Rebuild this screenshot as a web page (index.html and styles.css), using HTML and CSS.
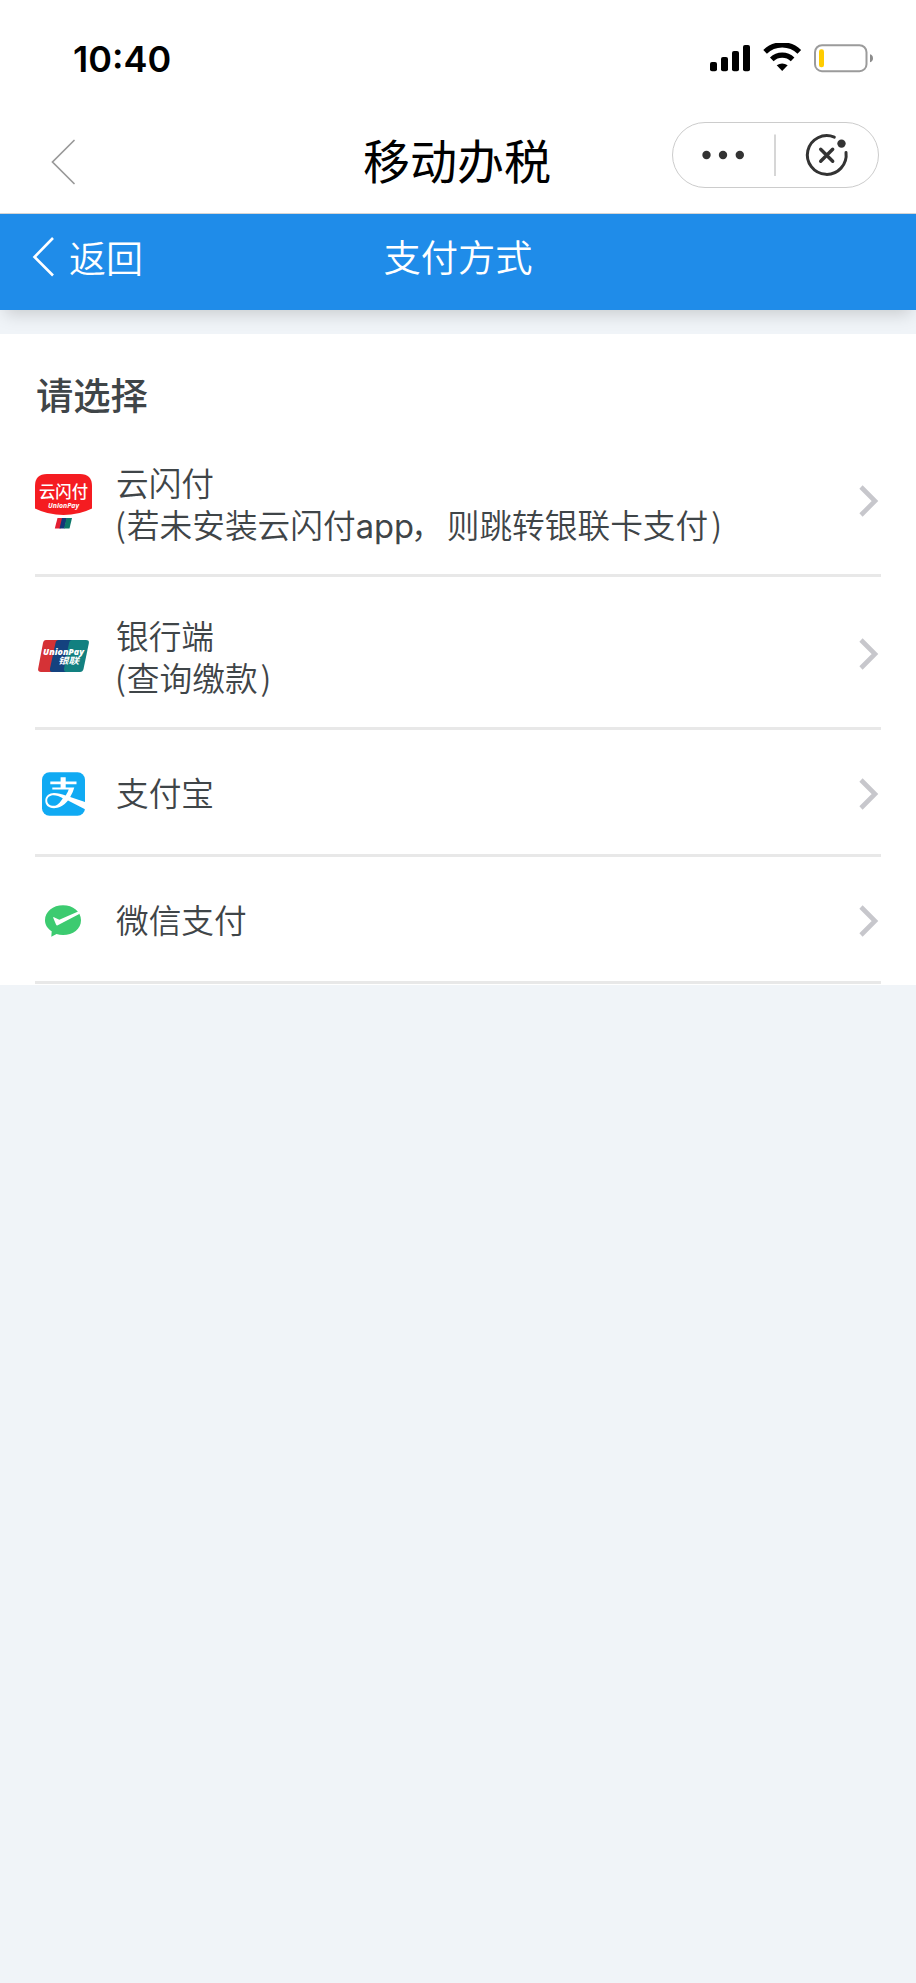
FILE: index.html
```html
<!DOCTYPE html>
<html lang="zh-CN">
<head>
<meta charset="utf-8">
<title>支付方式</title>
<link rel="stylesheet" href="styles.css">
</head>
<body>
<div class="status">
  <span class="time">10:40</span>
  <svg class="status-icons" width="164" height="30" viewBox="0 0 164 30">
    <rect x="0" y="19" width="7" height="9.3" rx="2"/>
    <rect x="11" y="14" width="7" height="14.3" rx="2"/>
    <rect x="22" y="8" width="7" height="20.3" rx="2"/>
    <rect x="33" y="2" width="7" height="26.3" rx="2"/>
    <g fill="none" stroke="#000" stroke-width="5.2">
      <path d="M55.1 8.8A24.5 24.5 0 0 1 89.3 8.8"/>
      <path d="M61.8 16.300A15 15 0 0 1 82.6 16.300"/>
    </g>
    <path d="M66.7 22.2Q72.2 18.8 77.7 22.2L72.2 28Z"/>
    <rect x="105" y="2.2" width="51.5" height="26" rx="7" fill="none" stroke="#9b9b9b" stroke-width="2"/>
    <rect x="109" y="6.2" width="5" height="18" rx="2.2" fill="#fc0"/>
    <path d="M160 11.2Q163 12 163 15.2Q163 18.400 160 19.200Z" fill="#8c8c8c"/>
  </svg>
</div>
<header class="app-bar">
  <svg class="app-back" width="25" height="46" viewBox="0 0 25 46"><path d="M24 1.500L2.500 23L24 44.500" fill="none" stroke="#999" stroke-width="1.700" stroke-linecap="round"/></svg>
  <h1 class="app-title">移动办税</h1>
  <div class="capsule">
    <svg width="205" height="64" viewBox="0 0 205 64">
      <g fill="#333"><circle cx="33.500" cy="32" r="4.200"/><circle cx="50" cy="32" r="4.200"/><circle cx="66.800" cy="32" r="4.200"/><circle cx="168.500" cy="20.600" r="4.200"/></g>
      <path d="M102 11.500V53" stroke="#c8c8c8" stroke-width="1.500"/>
      <g fill="none" stroke="#333" stroke-width="3" stroke-linecap="round"><path d="M161.300 14.100A19.400 19.400 0 1 0 173 29.500"/><path d="M147.700 26.200L159.700 38.200M159.700 26.200L147.700 38.200" stroke-width="3.400"/></g>
    </svg>
  </div>
</header>
<nav class="nav">
  <a class="nav-back"><svg width="22" height="40" viewBox="0 0 22 40"><path d="M21 1L2.500 20L21 38.500" fill="none" stroke="#fff" stroke-width="2.600"/></svg><span>返回</span></a>
  <h2 class="nav-title">支付方式</h2>
</nav>
<main class="panel">
  <h3 class="heading">请选择</h3>
  <ul class="methods">
    <li class="method double">
      <div class="logo">
        <svg width="57" height="55" viewBox="0 0 57 55">
          <path d="M0 12Q0 0 12 0H45Q57 0 57 12V34.500Q44 41 28.500 41T0 34.500Z" fill="#f51c21"/>
          <text class="cloud-name" x="4" y="23.500" textLength="49" lengthAdjust="spacingAndGlyphs">云闪付</text>
          <text class="cloud-sub" x="13" y="33.500" textLength="31" lengthAdjust="spacingAndGlyphs">UnionPay</text>
          <path d="M22.500 44H28L25.500 54.500H19.800Z" fill="#e31f32"/><path d="M27 44H32L29.500 54.500H24.500Z" fill="#123779"/><path d="M31.500 44H37L34.500 54.500H29Z" fill="#0c7769"/>
        </svg>
      </div>
      <p class="label">云闪付<br><span class="open">(</span>若未安装云闪付<span class="latin">app</span><span class="comma">，</span>则跳转银联卡支付<span class="close">)</span></p>
      <svg class="arrow" width="20" height="34" viewBox="0 0 20 34"><path d="M2 3L16 17L2 31" fill="none" stroke="#c7c7cc" stroke-width="4.600"/></svg>
    </li>
    <li class="method double">
      <div class="logo low">
        <svg width="51" height="32" viewBox="0 0 51 32">
          <path d="M8 0H22L15 32H3Q-.5 32 .2 28.500L5 3Q5.600 0 8 0Z" fill="#d53236"/>
          <path d="M20.500 0H36L29 32H14Q11.500 32 12 28.500L17.500 3Q18 0 20.500 0Z" fill="#14427f"/>
          <path d="M34 0H48Q51.500 0 50.800 3.500L45.500 29Q44.800 32 42 32H28Q25.500 32 26 28.500L31 3Q31.600 0 34 0Z" fill="#128080"/>
          <text class="union-name" x="5" y="15" textLength="41" lengthAdjust="spacingAndGlyphs">UnionPay</text>
          <text class="union-cn" x="20" y="24" textLength="21" lengthAdjust="spacingAndGlyphs">银联</text>
        </svg>
      </div>
      <p class="label">银行端<br><span class="open">(</span>查询缴款<span class="close">)</span></p>
      <svg class="arrow" width="20" height="34" viewBox="0 0 20 34"><path d="M2 3L16 17L2 31" fill="none" stroke="#c7c7cc" stroke-width="4.600"/></svg>
    </li>
    <li class="method">
      <div class="logo">
        <svg width="44" height="44" viewBox="0 0 44 44">
          <rect y=".3" width="43" height="43.400" rx="7.500" fill="#10aaf3"/>
          <path d="M18.600 5.200H23.700V9.500H34.500V12.200H23.700V15.500H32.300Q31 20.500 28.200 25L43 30V37.200L26 28.600C21 34.500 16.500 36.200 12 36.200C6 36.200 3.300 32.800 3.300 28.800C3.300 24 7.300 21 12 21C16 21 19.500 22.200 23.700 23.500Q25.800 20.500 26.700 17.600H10.300V15.500H18.600V12.200H8.300V9.500H18.600ZM20.800 26.200C17.500 24.500 14.500 23.300 11.500 23.300C7.500 23.300 5.200 25.700 5.200 28.500C5.200 31.500 7.500 33.800 11.800 33.800C15.500 33.800 18.400 30.200 20.800 26.200Z" fill="#fff" fill-rule="evenodd"/>
        </svg>
      </div>
      <p class="label">支付宝</p>
      <svg class="arrow" width="20" height="34" viewBox="0 0 20 34"><path d="M2 3L16 17L2 31" fill="none" stroke="#c7c7cc" stroke-width="4.600"/></svg>
    </li>
    <li class="method">
      <div class="logo">
        <svg width="37" height="32" viewBox="0 0 37 32">
          <path d="M18 .2C28 .2 36 6.500 36 15.200S28 30 18 30Q14.500 30 11.500 29L6.300 31.800L6.700 26.200C2.500 23.500 0 19.800 0 15.200C0 6.500 8 .2 18 .2Z" fill="#3ccb70"/>
          <path d="M9 12.300L14.300 14.800L34.300 6Q35.400 8.200 33.800 9.200L12.700 20.300Q11.600 20.800 11 19.500L8.300 13Q8 11.600 9 12.300Z" fill="#fff"/>
        </svg>
      </div>
      <p class="label">微信支付</p>
      <svg class="arrow" width="20" height="34" viewBox="0 0 20 34"><path d="M2 3L16 17L2 31" fill="none" stroke="#c7c7cc" stroke-width="4.600"/></svg>
    </li>
  </ul>
</main>
</body>
</html>
```
FILE: styles.css
```css
* { box-sizing: border-box; }
body {
  margin: 0;
  min-height: 1983px;
  background: #f0f4f8;
  font-family: "Noto Sans CJK SC", "Noto Sans", sans-serif;
  color: #3f4548;
}
h1, h2, h3, p, ul { margin: 0; padding: 0; font-weight: 400; }
svg { display: block; flex: none; }

.status {
  height: 112px;
  padding: 43px 42px 0 73px;
  display: flex;
  justify-content: space-between;
  background: #fff;
}
.time {
  font: 600 36px/32px Inter, sans-serif;
  color: #000;
}

.app-bar {
  height: 102px;
  padding: 0 37px 0 50px;
  display: grid;
  grid-template-columns: 313px 1fr auto;
  align-items: start;
  background: #fff;
  border-bottom: 1px solid #d5d5d5;
}
.app-back { margin-top: 27px; }
.app-title {
  padding-top: 17px;
  color: #000;
  font-size: 47px;
  line-height: 60px;
}
.capsule {
  width: 207px;
  height: 66px;
  margin-top: 10px;
  border: 1px solid #ccc;
  border-radius: 33px;
}

.nav {
  height: 96px;
  padding: 0 32px;
  display: grid;
  grid-template-columns: 1fr auto 1fr;
  color: #fff;
  background: #1f8ce9;
  box-shadow: 0 9px 16px -5px rgba(0, 0, 0, .17);
}
.nav-back {
  display: flex;
  gap: 15px;
  padding-top: 23px;
  font-size: 37px;
  line-height: 40px;
  font-weight: 350;
}
.nav-title {
  padding-top: 22px;
  font-size: 37.300px;
  line-height: 40px;
  font-weight: 350;
}

.panel {
  height: 651px;
  margin-top: 24px;
  padding: 40px 35px 0;
  background: #fff;
}
.heading {
  height: 50px;
  padding-left: 1px;
  font-size: 37.300px;
  line-height: 40px;
  font-weight: 500;
}
.methods { list-style: none; }
.method {
  height: 127px;
  display: flex;
  align-items: center;
  border-bottom: 3px solid #e8e8e8;
}
.double { height: 153px; }
.logo {
  width: 57px;
  padding-top: 4px;
  display: flex;
  justify-content: center;
}
.low { padding-top: 7px; }
.label {
  flex: 1;
  padding-left: 24px;
  font-size: 32.700px;
  line-height: 42px;
  font-weight: 350;
}
.double .label { padding-top: 8px; }
.latin { font-family: Inter, sans-serif; font-weight: 400; line-height: 1; }
.open { margin: 0 1px 0 -1px; }
.comma { margin: 0 3px 0 -3px; }
.close { margin-left: 3px; }
.arrow { margin: 4px 2px 0 0; }

.cloud-name { fill: #fff; font-size: 16.500px; font-weight: 500; }
.cloud-sub { fill: #fff; font: italic 700 7.500px "Open Sans", sans-serif; }
.union-name { fill: #fff; font: italic 800 8.500px "Open Sans", sans-serif; }
.union-cn { fill: #fff; font-size: 9px; font-weight: 700; font-style: italic; }
```
